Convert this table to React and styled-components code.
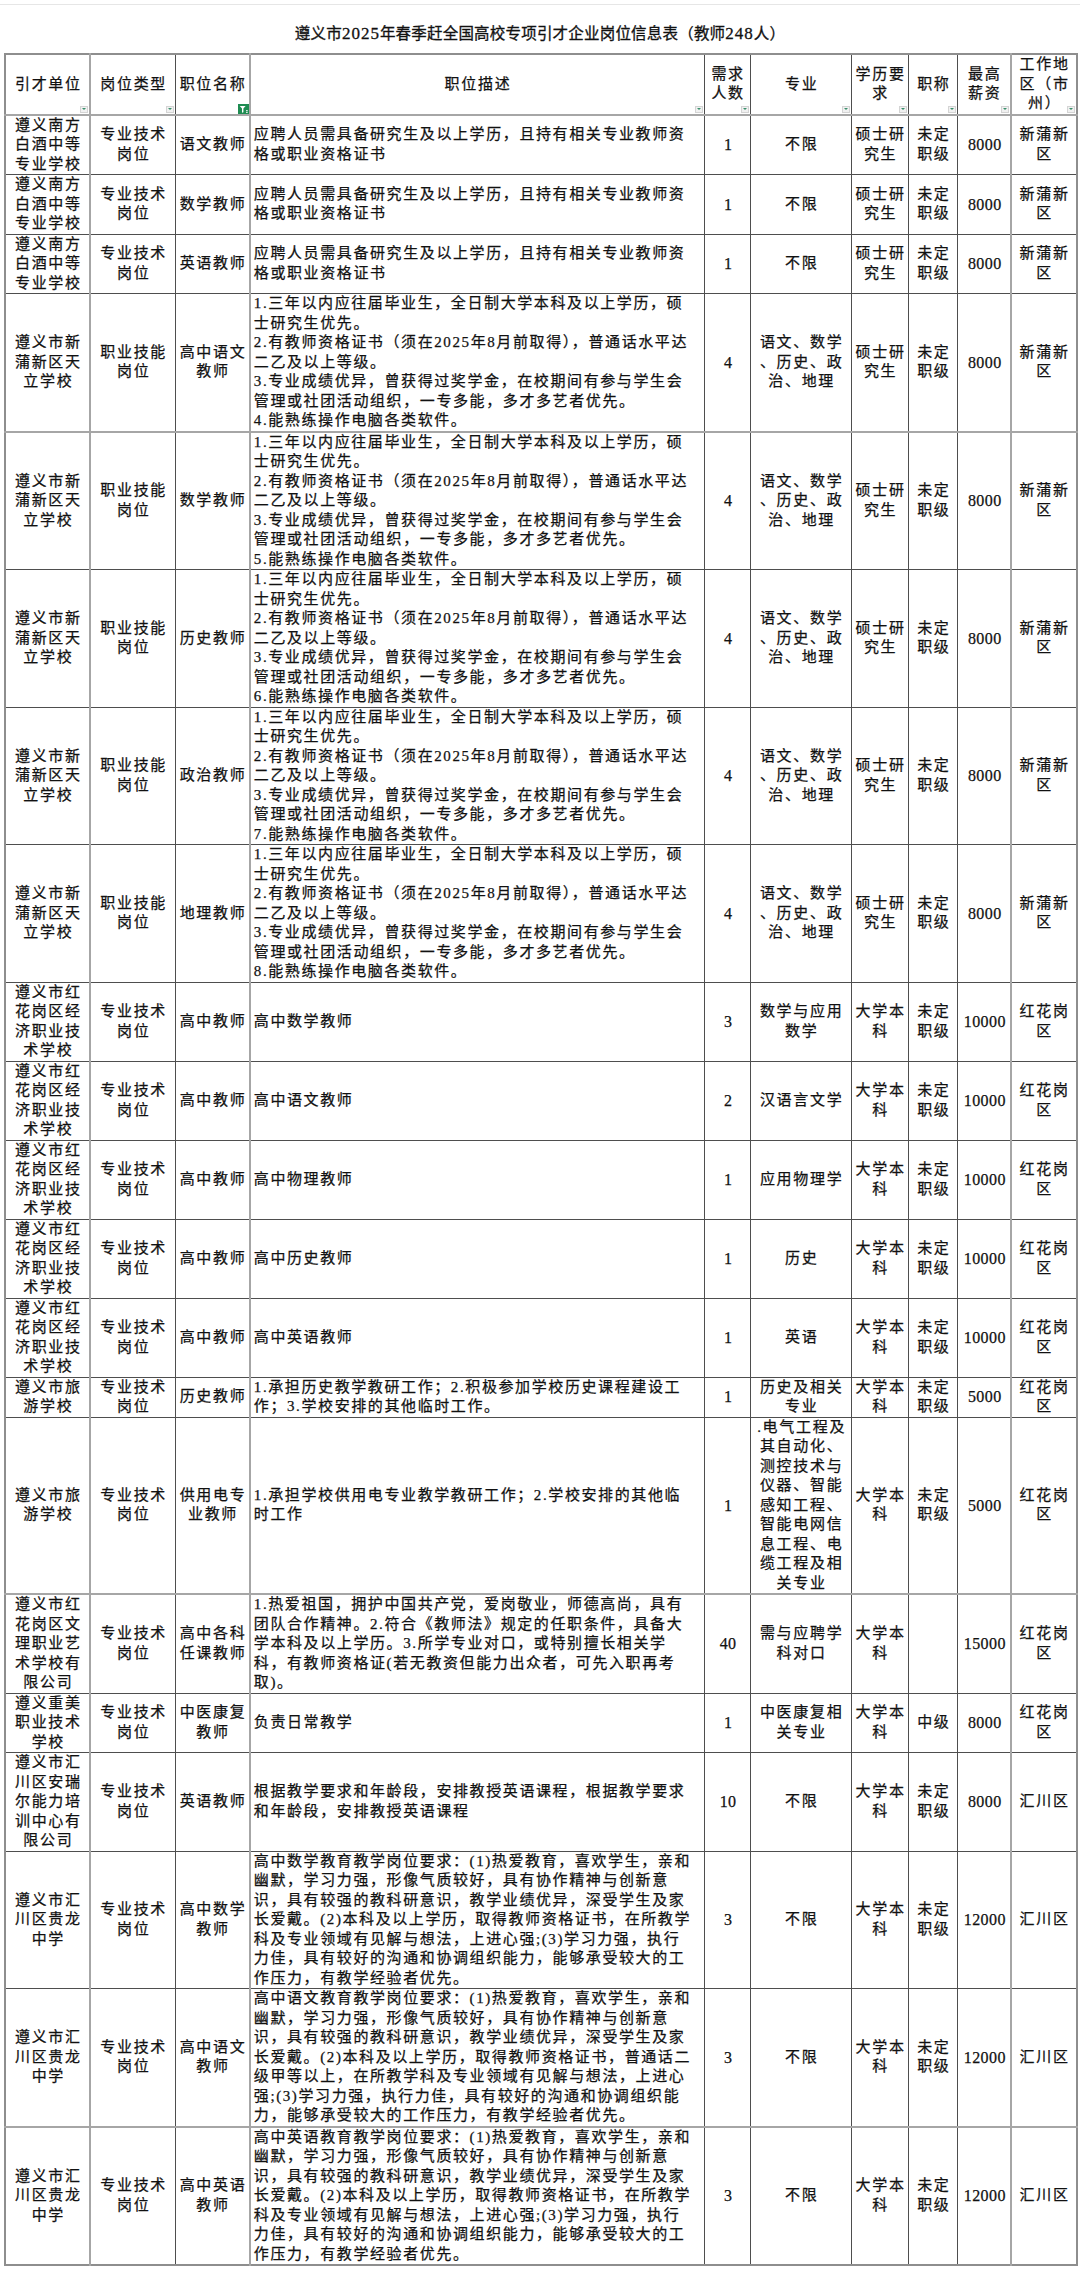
import React from 'react';
import styled, { createGlobalStyle } from 'styled-components';

const GlobalStyle = createGlobalStyle`
  html, body { margin: 0; padding: 0; background: #ffffff; }
  body {
    font-family: "Liberation Serif", "Noto Sans CJK SC", serif;
    color: #111111;
  }
`;

const Page = styled.div`
  width: 1080px;
  padding-top: 4px;
  box-sizing: border-box;
`;

const TopRule = styled.div`
  height: 1px;
  background: #e6e6e6;
`;

const Sheet = styled.div`
  width: 1072px;
  margin-left: 4px;
  display: flex;
  flex-direction: column;
`;

const Title = styled.h1`
  margin: 0;
  padding-top: 6px;
  height: 42px;
  line-height: 42px;
  text-align: center;
  font-family: "Noto Sans CJK SC", "Liberation Serif", serif;
  font-size: 15.5px;
  font-weight: 400;
  letter-spacing: 0.2px;
  color: #111;
  -webkit-text-stroke: 0.3px #111;
`;

const TitleNum = styled.span`
  font-family: "Liberation Serif", "Times New Roman", serif;
  font-size: 17px;
  letter-spacing: 1px;
`;

const Table = styled.table`
  border-collapse: collapse;
  table-layout: fixed;
  width: 1072px;
  border: 2px solid #8e8e8e;
`;

const Col = styled.col`
  width: ${(p) => p.$w}px;
  border-right: ${(p) => (p.$soft ? '2px solid #a6a6a6' : 'none')};
`;

const Row = styled.tr`
  border-bottom: ${(p) => (p.$soft ? '2px solid #a6a6a6' : 'none')};
`;

const Cell = styled.td`
  border: 1px solid #4e4e4e;
  padding: ${(p) => (p.$left ? '0 1px 0 3px' : '0 0 0 1.7px')};
  vertical-align: middle;
  text-align: ${(p) => (p.$left ? 'left' : 'center')};
  white-space: pre;
  overflow: hidden;
  font-family: "Liberation Serif", "Noto Sans CJK SC", serif;
  font-size: ${(p) => (p.$num ? 16 : 15)}px;
  font-weight: 400;
  letter-spacing: ${(p) => (p.$num ? 0.4 : p.$left ? 1.6 : 1.7)}px;
  line-height: 19.5px;
  color: #111;
  -webkit-text-stroke: 0.25px #111;
`;

const Head = styled(Cell).attrs({ as: 'th' })`
  position: relative;
  font-weight: 400;
  text-align: center;
  padding: 0 0 0 1.7px;
`;

const DropBtn = styled.span`
  position: absolute;
  right: 1px;
  bottom: 1px;
  width: 8px;
  height: 7px;
  box-sizing: border-box;
  background: #f1f1f1;
  border: 1px solid #d4d4d4;
  display: flex;
  align-items: center;
  justify-content: center;
  &::after {
    content: '';
    width: 0;
    height: 0;
    border-left: 2px solid transparent;
    border-right: 2px solid transparent;
    border-top: 2px solid #3b8f6c;
  }
`;

const FilterBtn = styled.span`
  position: absolute;
  right: 0;
  bottom: 0;
  width: 11px;
  height: 10px;
  display: flex;
  line-height: 0;
`;

const FilterIcon = () => (
  <svg width="11" height="10" viewBox="0 0 11 10">
    <rect x="0" y="0" width="11" height="10" fill="#1f8c52" />
    <path d="M1.8 2 H7.6 L5.4 4.6 V8.2 L4 8.8 V4.6 Z" fill="#ffffff" />
    <rect x="8.2" y="6" width="1.4" height="1.2" fill="#ffffff" />
    <rect x="8.2" y="7.8" width="1.4" height="1.2" fill="#ffffff" />
  </svg>
);

const COLS = [85, 85.1, 74.7, 454.3, 46.4, 100.7, 57.2, 49.3, 53.1, 66.2];
const SOFT_COLS = [0, 2, 8];
const NUM_COLS = [4, 8];

const HEADERS = [
  { t: '引才单位', btn: 'drop' },
  { t: '岗位类型', btn: 'drop' },
  { t: '职位名称', btn: 'filter' },
  { t: '职位描述', btn: 'drop' },
  { t: '需求\n人数', btn: 'drop' },
  { t: '专业', btn: 'drop' },
  { t: '学历要\n求', btn: 'drop' },
  { t: '职称', btn: 'drop' },
  { t: '最高\n薪资', btn: 'drop' },
  { t: '工作地\n区（市\n州）', btn: 'drop' },
];

const nanfang = '遵义南方\n白酒中等\n专业学校';
const tech = '专业技术\n岗位';
const skill = '职业技能\n岗位';
const desc1 = '应聘人员需具备研究生及以上学历，且持有相关专业教师资\n格或职业资格证书';
const master = '硕士研\n究生';
const undef = '未定\n职级';
const xp = '新蒲新\n区';
const tianli = '遵义市新\n蒲新区天\n立学校';
const tianliDesc = (n) =>
  `1.三年以内应往届毕业生，全日制大学本科及以上学历，硕\n士研究生优先。\n2.有教师资格证书（须在2025年8月前取得），普通话水平达\n二乙及以上等级。\n3.专业成绩优异，曾获得过奖学金，在校期间有参与学生会\n管理或社团活动组织，一专多能，多才多艺者优先。\n${n}.能熟练操作电脑各类软件。`;
const subj = '语文、数学\n、历史、政\n治、地理';
const hhg = '遵义市红\n花岗区经\n济职业技\n术学校';
const bk = '大学本\n科';
const hhgq = '红花岗\n区';
const guilong = '遵义市汇\n川区贵龙\n中学';
const hc = '汇川区';

const mathDesc =
  '高中数学教育教学岗位要求：(1)热爱教育，喜欢学生，亲和\n幽默，学习力强，形像气质较好，具有协作精神与创新意\n识，具有较强的教科研意识，教学业绩优异，深受学生及家\n长爱戴。(2)本科及以上学历，取得教师资格证书，在所教学\n科及专业领域有见解与想法，上进心强;(3)学习力强，执行\n力佳，具有较好的沟通和协调组织能力，能够承受较大的工\n作压力，有教学经验者优先。';
const chnDesc =
  '高中语文教育教学岗位要求：(1)热爱教育，喜欢学生，亲和\n幽默，学习力强，形像气质较好，具有协作精神与创新意\n识，具有较强的教科研意识，教学业绩优异，深受学生及家\n长爱戴。(2)本科及以上学历，取得教师资格证书，普通话二\n级甲等以上，在所教学科及专业领域有见解与想法，上进心\n强;(3)学习力强，执行力佳，具有较好的沟通和协调组织能\n力，能够承受较大的工作压力，有教学经验者优先。';
const engDesc =
  '高中英语教育教学岗位要求：(1)热爱教育，喜欢学生，亲和\n幽默，学习力强，形像气质较好，具有协作精神与创新意\n识，具有较强的教科研意识，教学业绩优异，深受学生及家\n长爱戴。(2)本科及以上学历，取得教师资格证书，在所教学\n科及专业领域有见解与想法，上进心强;(3)学习力强，执行\n力佳，具有较好的沟通和协调组织能力，能够承受较大的工\n作压力，有教学经验者优先。';

const ROWS = [
  { c: [nanfang, tech, '语文教师', desc1, '1', '不限', master, undef, '8000', xp] },
  { c: [nanfang, tech, '数学教师', desc1, '1', '不限', master, undef, '8000', xp] },
  { c: [nanfang, tech, '英语教师', desc1, '1', '不限', master, undef, '8000', xp] },
  { c: [tianli, skill, '高中语文\n教师', tianliDesc(4), '4', subj, master, undef, '8000', xp], soft: true },
  { c: [tianli, skill, '数学教师', tianliDesc(5), '4', subj, master, undef, '8000', xp] },
  { c: [tianli, skill, '历史教师', tianliDesc(6), '4', subj, master, undef, '8000', xp] },
  { c: [tianli, skill, '政治教师', tianliDesc(7), '4', subj, master, undef, '8000', xp] },
  { c: [tianli, skill, '地理教师', tianliDesc(8), '4', subj, master, undef, '8000', xp] },
  { c: [hhg, tech, '高中教师', '高中数学教师', '3', '数学与应用\n数学', bk, undef, '10000', hhgq] },
  { c: [hhg, tech, '高中教师', '高中语文教师', '2', '汉语言文学', bk, undef, '10000', hhgq] },
  { c: [hhg, tech, '高中教师', '高中物理教师', '1', '应用物理学', bk, undef, '10000', hhgq] },
  { c: [hhg, tech, '高中教师', '高中历史教师', '1', '历史', bk, undef, '10000', hhgq] },
  { c: [hhg, tech, '高中教师', '高中英语教师', '1', '英语', bk, undef, '10000', hhgq] },
  {
    c: [
      '遵义市旅\n游学校',
      tech,
      '历史教师',
      '1.承担历史教学教研工作；2.积极参加学校历史课程建设工\n作；3.学校安排的其他临时工作。',
      '1',
      '历史及相关\n专业',
      bk,
      undef,
      '5000',
      hhgq,
    ],
  },
  {
    c: [
      '遵义市旅\n游学校',
      tech,
      '供用电专\n业教师',
      '1.承担学校供用电专业教学教研工作；2.学校安排的其他临\n时工作',
      '1',
      '.电气工程及\n其自动化、\n测控技术与\n仪器、智能\n感知工程、\n智能电网信\n息工程、电\n缆工程及相\n关专业',
      bk,
      undef,
      '5000',
      hhgq,
    ],
    soft: true,
  },
  {
    c: [
      '遵义市红\n花岗区文\n理职业艺\n术学校有\n限公司',
      tech,
      '高中各科\n任课教师',
      '1.热爱祖国，拥护中国共产党，爱岗敬业，师德高尚，具有\n团队合作精神。2.符合《教师法》规定的任职条件，具备大\n学本科及以上学历。3.所学专业对口，或特别擅长相关学\n科，有教师资格证(若无教资但能力出众者，可先入职再考\n取)。',
      '40',
      '需与应聘学\n科对口',
      bk,
      '',
      '15000',
      hhgq,
    ],
  },
  { c: ['遵义重美\n职业技术\n学校', tech, '中医康复\n教师', '负责日常教学', '1', '中医康复相\n关专业', bk, '中级', '8000', hhgq] },
  {
    c: [
      '遵义市汇\n川区安瑞\n尔能力培\n训中心有\n限公司',
      tech,
      '英语教师',
      '根据教学要求和年龄段，安排教授英语课程，根据教学要求\n和年龄段，安排教授英语课程',
      '10',
      '不限',
      bk,
      undef,
      '8000',
      hc,
    ],
  },
  { c: [guilong, tech, '高中数学\n教师', mathDesc, '3', '不限', bk, undef, '12000', hc] },
  { c: [guilong, tech, '高中语文\n教师', chnDesc, '3', '不限', bk, undef, '12000', hc], soft: true },
  { c: [guilong, tech, '高中英语\n教师', engDesc, '3', '不限', bk, undef, '12000', hc] },
];

export default function App() {
  return (
    <>
      <GlobalStyle />
      <Page>
        <TopRule />
        <Sheet>
          <Title>
            遵义市<TitleNum>2025</TitleNum>年春季赶全国高校专项引才企业岗位信息表（教师
            <TitleNum>248</TitleNum>人）
          </Title>
          <Table>
            <colgroup>
              {COLS.map((w, i) => (
                <Col key={i} $w={w} $soft={SOFT_COLS.includes(i)} />
              ))}
            </colgroup>
            <thead>
              <Row $soft>
                {HEADERS.map((h, i) => (
                  <Head key={i}>
                    {h.t}
                    {h.btn === 'drop' ? (
                      <DropBtn />
                    ) : (
                      <FilterBtn>
                        <FilterIcon />
                      </FilterBtn>
                    )}
                  </Head>
                ))}
              </Row>
            </thead>
            <tbody>
              {ROWS.map((r, ri) => (
                <Row key={ri} $soft={r.soft}>
                  {r.c.map((txt, ci) => (
                    <Cell key={ci} $left={ci === 3} $num={NUM_COLS.includes(ci)}>
                      {txt}
                    </Cell>
                  ))}
                </Row>
              ))}
            </tbody>
          </Table>
        </Sheet>
      </Page>
    </>
  );
}
